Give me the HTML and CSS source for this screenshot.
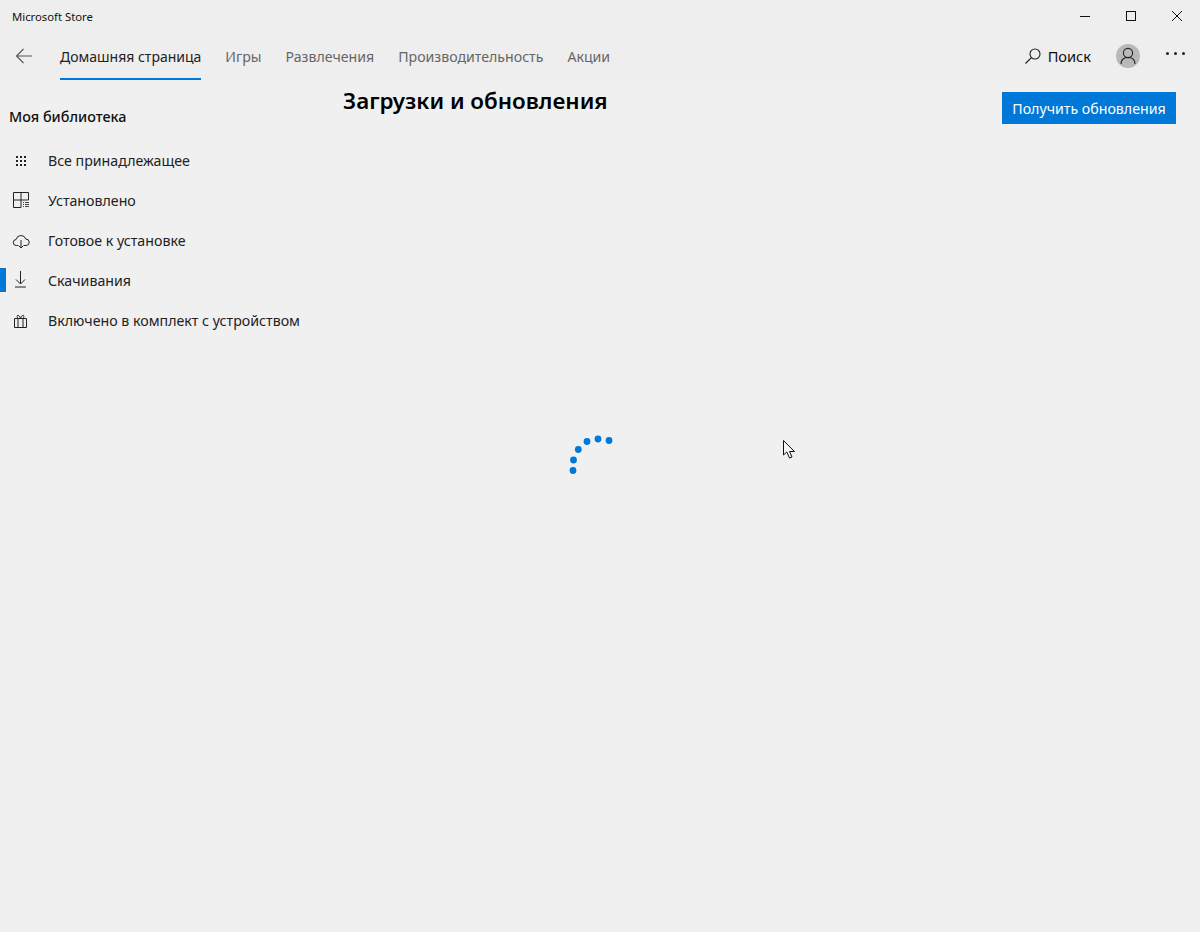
FILE: index.html
```html
<!DOCTYPE html>
<html lang="ru">
<head>
    <meta charset="UTF-8">
    <title>Microsoft Store</title>
    <link rel="stylesheet" href="styles.css">
</head>
<body>
    <!-- Title bar -->
    <header class="top">
        <div class="titlebar">
            <span class="app-name">Microsoft Store</span>
            <div class="window-buttons">
                <button class="win-btn"><svg width="12" height="12" viewBox="0 0 12 12"><path d="M1 6.5h10" stroke="#111" fill="none"/></svg></button>
                <button class="win-btn"><svg width="12" height="12" viewBox="0 0 12 12"><rect x="1.5" y="1.5" width="9" height="9" stroke="#111" fill="none"/></svg></button>
                <button class="win-btn"><svg width="12" height="12" viewBox="0 0 12 12"><path d="M1 1l10 10M11 1L1 11" stroke="#111" fill="none"/></svg></button>
            </div>
        </div>

        <!-- Navigation -->
        <nav class="nav">
            <button class="back"><svg width="18" height="16" viewBox="0 0 18 16"><path d="M17 8H1.500M8.500 1L1.500 8l7 7" stroke="#555" stroke-width="1.100" fill="none"/></svg></button>
            <a class="nav-link active">Домашняя страница</a>
            <a class="nav-link">Игры</a>
            <a class="nav-link">Развлечения</a>
            <a class="nav-link">Производительность</a>
            <a class="nav-link">Акции</a>
            <div class="nav-right">
                <a class="search">
                    <svg width="18" height="18" viewBox="0 0 18 18"><circle cx="11" cy="7" r="5" stroke="#222" stroke-width="1.100" fill="none"/><path d="M7.400 10.600L1.500 16.500" stroke="#222" stroke-width="1.200" fill="none"/></svg>
                    Поиск
                </a>
                <span class="avatar"><svg width="24" height="24" viewBox="0 0 24 24"><circle cx="12" cy="9" r="4.600" stroke="#222" stroke-width="1.100" fill="none"/><path d="M5 20c0-4.500 3-6.500 7-6.500s7 2 7 6.500" stroke="#222" stroke-width="1.100" fill="none"/></svg></span>
                <span class="more"><i></i><i></i><i></i></span>
            </div>
        </nav>
    </header>

    <div class="layout">
        <!-- Sidebar -->
        <aside class="sidebar">
            <h3>Моя библиотека</h3>
            <ul class="side-list">
                <li><svg width="20" height="20" viewBox="0 0 20 20" fill="#222"><rect x="6" y="6" width="2" height="2"/><rect x="10" y="6" width="2" height="2"/><rect x="14" y="6" width="2" height="2"/><rect x="6" y="10" width="2" height="2"/><rect x="10" y="10" width="2" height="2"/><rect x="14" y="10" width="2" height="2"/><rect x="6" y="14" width="2" height="2"/><rect x="10" y="14" width="2" height="2"/><rect x="14" y="14" width="2" height="2"/></svg>Все принадлежащее</li>
                <li><svg width="20" height="20" viewBox="0 0 20 20" fill="none" stroke="#222"><path d="M3.500 2.500h15v7.500h-15zM3.500 10v7.500h7.500V2.500"/><path d="M13 12.500h1M15 12.500h4M13 14.500h1M15 14.500h4M13 16.500h1M15 16.500h4" stroke="#444"/></svg>Установлено</li>
                <li><svg width="20" height="20" viewBox="0 0 20 20" fill="none" stroke="#222"><path d="M8 15.500H6.500a3 3 0 0 1-.4-6 5 5 0 0 1 9.700-.4 3.200 3.200 0 0 1 .4 6.400H14"/><path d="M11 10v8M8.500 15.500L11 18l2.500-2.500"/></svg>Готовое к установке</li>
                <li class="current"><svg width="20" height="20" viewBox="0 0 20 20" fill="none" stroke="#222"><path d="M10.500 1v13M6 9.500l4.500 4.500L15 9.500M5 17h11"/></svg>Скачивания</li>
                <li><svg width="20" height="20" viewBox="0 0 20 20" fill="none" stroke="#222"><path d="M4.500 8.500h12v9h-12zM8 8.500v9M13 8.500v9M8 8.500C5.500 5 9 3.500 10.500 8.500 12 3.500 15.500 5 13 8.500"/></svg>Включено в комплект с устройством</li>
            </ul>
        </aside>

        <!-- Content -->
        <main class="content">
            <h1>Загрузки и обновления</h1>
            <button class="btn">Получить обновления</button>
        </main>
    </div>

    <!-- Loading spinner -->
    <div class="spinner">
        <svg width="50" height="42" viewBox="0 0 50 42" fill="#0078d7">
            <circle cx="5" cy="37.500" r="3.400"/><circle cx="5.500" cy="27" r="3.400"/><circle cx="10.300" cy="16.500" r="3.400"/><circle cx="19" cy="8.500" r="3.400"/><circle cx="30" cy="6" r="3.400"/><circle cx="41" cy="7.500" r="3.400"/>
        </svg>
    </div>

    <!-- Mouse cursor -->
    <svg class="cursor" width="14" height="21" viewBox="0 0 14 21"><path d="M1.500 1.500V16L4.800 13L7.500 19L10 18L7.500 12.500H12.500z" fill="#f4f4f4" stroke="#111"/></svg>
</body>
</html>
```

FILE: styles.css
```css
* {
    margin: 0;
    padding: 0;
    box-sizing: border-box;
}
body {
    position: relative;
    height: 932px;
    overflow: hidden;
    background-color: #f0f0f0;
    font-family: 'Noto Sans', 'Open Sans', sans-serif;
    font-size: 14.200px;
    color: #222;
}
button {
    border: none;
    background: none;
    font: inherit;
}

/* Title bar */
.top {
    background-color: #eeeeee;
}
.titlebar {
    display: flex;
    justify-content: space-between;
    height: 32px;
}
.app-name {
    padding: 10px 0 0 12px;
    font-size: 11.300px;
    line-height: 14px;
    color: #111;
}
.window-buttons {
    display: flex;
}
.win-btn {
    display: flex;
    justify-content: center;
    align-items: center;
    width: 46px;
}

/* Navigation */
.nav {
    display: flex;
    height: 48px;
    align-items: stretch;
}
.back {
    display: flex;
    align-items: center;
    width: 60px;
    padding-left: 15px;
}
.nav-link {
    display: flex;
    align-items: center;
    margin-right: 24px;
    padding-top: 2px;
    border-bottom: 2px solid transparent;
    color: #666;
    font-size: 14.150px;
}
.nav-link.active {
    color: #222;
    font-size: 14px;
    border-bottom-color: #0078d7;
}
.nav-right {
    display: flex;
    align-items: center;
    margin-left: auto;
}
.search {
    display: flex;
    align-items: center;
    gap: 6px;
    color: #111;
    font-size: 14.600px;
}
.avatar {
    display: flex;
    justify-content: center;
    align-items: center;
    width: 24px;
    height: 24px;
    margin-left: 25px;
    border-radius: 50%;
    background-color: #b8b8b8;
}
.more {
    display: flex;
    gap: 5px;
    width: 60px;
    margin-bottom: 6px;
    padding-left: 26px;
}
.more i {
    width: 3px;
    height: 3px;
    border-radius: 50%;
    background-color: #222;
}

/* Layout */
.layout {
    display: grid;
    grid-template-columns: 343px 1fr;
}

/* Sidebar */
.sidebar h3 {
    padding: 27px 0 0 9px;
    font-size: 14.400px;
    font-weight: 500;
    line-height: 20px;
    color: #111;
}
.side-list {
    margin-top: 13px;
    list-style: none;
}
.side-list li {
    display: flex;
    align-items: center;
    gap: 18px;
    height: 40px;
    padding-left: 10px;
    font-size: 14.200px;
}
.side-list li.current {
    position: relative;
}
.side-list li.current::before {
    content: '';
    position: absolute;
    left: 0;
    top: 8px;
    width: 6px;
    height: 24px;
    background-color: #0078d7;
}

/* Content */
.content {
    display: flex;
    justify-content: space-between;
    align-items: flex-start;
    padding: 12px 24px 0 0;
}
.content h1 {
    margin-top: -1px;
    font-size: 22.400px;
    font-weight: 600;
    line-height: 20px;
    color: #000;
}
.btn {
    width: 174px;
    height: 32px;
    background-color: #0078d7;
    color: #fff;
}

/* Overlays */
.spinner {
    position: absolute;
    left: 568px;
    top: 433px;
}
.cursor {
    position: absolute;
    left: 782px;
    top: 439px;
}
```
